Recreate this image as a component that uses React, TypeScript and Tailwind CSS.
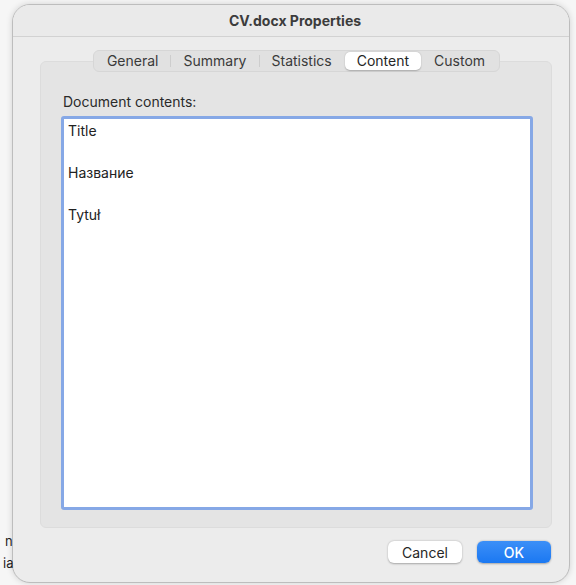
import React from 'react';

const tabs = ['General', 'Summary', 'Statistics', 'Content', 'Custom'];
const selectedTab = 'Content';

const lines = ['Title', 'Название', 'Tytuł'];

export default function App() {
  return (
    <div className="relative w-[576px] h-[585px] overflow-hidden bg-[#f6f6f6] font-['Inter','Liberation_Sans',sans-serif] text-[#262626]">
      <div className="pl-[12px] pt-[4px]">
        <div className="relative w-[558px] h-[579px] rounded-[18px] border border-[#bdbdbd] bg-[#ececec] shadow-[0_0_6px_rgba(0,0,0,0.15)] overflow-hidden">
          {/* title bar */}
          <div className="h-[32px] flex items-center justify-center border-b border-[#d2d2d2] bg-[#eaeaea]">
            <span className="text-[14px] font-bold text-[#3c3c3c] pl-[8px]">CV.docx Properties</span>
          </div>

          <div className="pl-[27px] pr-[17px] pt-[13px]">
            {/* tab strip */}
            <div className="relative z-10 flex justify-center pl-[1px]">
              <div className="flex h-[22px] rounded-[6px] border border-[#d6d6d6] bg-[#e1e1e1] p-[1px] text-[14px] leading-[16px]">
                {tabs.map((tab, i) => {
                  const active = tab === selectedTab;
                  const next = tabs[i + 1];
                  const showDivider = i < tabs.length - 1 && !active && next !== selectedTab;
                  return (
                    <div key={tab} className="flex items-center">
                      <div
                        className={
                          active
                            ? 'h-[18px] flex items-center pb-[1px] px-[12px] rounded-[5px] bg-white shadow-[0_0.5px_1.5px_rgba(0,0,0,0.25)] text-[#262626]'
                            : 'h-[18px] flex items-center pb-[1px] px-[12px] text-[#3a3a3a]'
                        }
                      >
                        {tab}
                      </div>
                      <div className={showDivider ? 'w-px h-[12px] bg-[#cdcdcd]' : 'w-px h-[12px]'} />
                    </div>
                  );
                })}
              </div>
            </div>

            {/* group box */}
            <div className="-mt-[11px] h-[467px] rounded-[6px] border border-[#dcdcdc] bg-[#e4e4e4] pt-[32px] pl-[20px] pr-[18px]">
              <div className="pl-[2px] text-[14px] leading-[16px] text-[#2a2a2a]">Document contents:</div>
              <div className="mt-[6px] h-[394px] rounded-[3px] border-[3px] border-[#86a8e6] bg-white pl-[4px] pt-[1px]">
                <div className="flex flex-col gap-[21px] text-[14px] leading-[21px] text-[#222222]">
                  {lines.map((line) => (
                    <div key={line}>{line}</div>
                  ))}
                </div>
              </div>
            </div>

            {/* buttons */}
            <div className="mt-[13px] flex justify-end gap-[15px] pr-[1px]">
              <button className="w-[74px] h-[22px] rounded-[6px] bg-white text-[14px] text-[#262626] shadow-[0_0.5px_2px_rgba(0,0,0,0.3)]">
                Cancel
              </button>
              <button className="w-[74px] h-[22px] rounded-[6px] bg-gradient-to-b from-[#3b8ff7] to-[#1a78f2] text-[14px] font-medium text-white shadow-[0_0.5px_2px_rgba(0,0,0,0.3)]">
                OK
              </button>
            </div>
          </div>
        </div>
      </div>

      {/* bits of the window behind the dialog, seen through its edge */}
      <div className="absolute left-[3px] top-[530px] z-20 flex flex-col text-[13px] leading-[22px] text-[#1e1e1e]">
        <span className="pl-[2px]">n</span>
        <span>ia</span>
      </div>
    </div>
  );
}
